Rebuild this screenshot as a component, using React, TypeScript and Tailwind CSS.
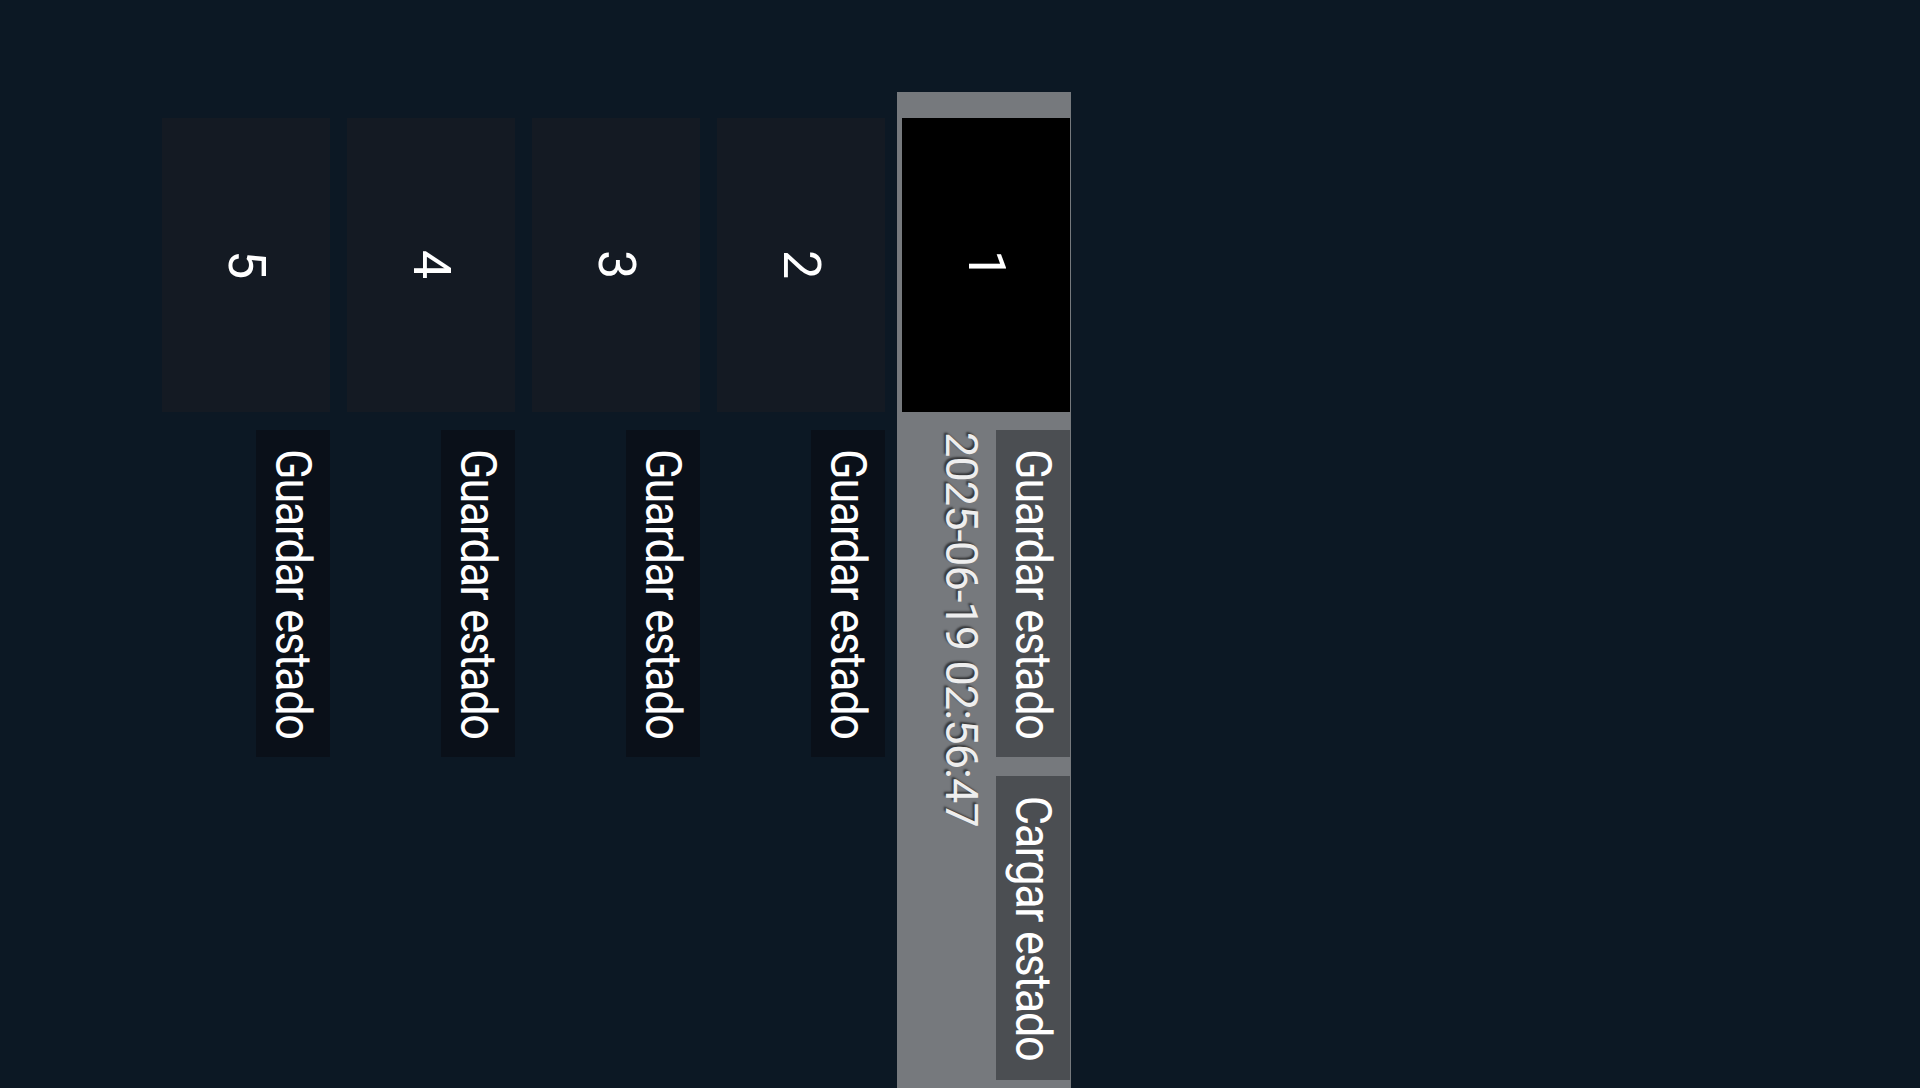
type Slot = {
  id: number;
  date?: string;
};

const slots: Slot[] = [
  { id: 1, date: '2025-06-19 02:56:47' },
  { id: 2 },
  { id: 3 },
  { id: 4 },
  { id: 5 },
];

function SaveSlot({ slot, selected }: { slot: Slot; selected: boolean }) {
  return (
    <div
      className={
        selected
          ? 'w-[174px] pt-[26px] pr-px flex items-start gap-[18px] bg-[#76797d]'
          : 'w-[174px] pt-[26px] pr-px flex items-start gap-[18px]'
      }
    >
      {/* Thumbnail */}
      <div
        className={
          selected
            ? 'w-[168px] h-[294px] flex items-center justify-center bg-black text-white text-[52px] leading-none'
            : 'w-[168px] h-[294px] flex items-center justify-center bg-[#141a23] text-white text-[52px] leading-none'
        }
      >
        {slot.id}
      </div>

      {/* Actions + date */}
      <div className="flex flex-col items-start gap-[12px]">
        <div className="flex gap-[19px]">
          <button
            className={
              selected
                ? 'w-[74px] h-[327px] flex items-center justify-center bg-[#4b4e52] text-white text-[50px] leading-none tracking-[-0.03em]'
                : 'w-[74px] h-[327px] flex items-center justify-center bg-[#0a1019] text-white text-[50px] leading-none tracking-[-0.03em]'
            }
          >
            <span className="inline-block scale-y-[0.9]">Guardar estado</span>
          </button>
          {slot.date && (
            <button className="w-[74px] h-[304px] flex items-center justify-center bg-[#4b4e52] text-white text-[50px] leading-none tracking-[-0.03em]">
              <span className="inline-block scale-y-[0.9]">Cargar estado</span>
            </button>
          )}
        </div>
        {slot.date && (
          <div className="pt-[2px] text-[#eeeeee] text-[45px] leading-none tracking-[-0.02em] [text-shadow:-2px_2px_2px_rgba(0,0,0,0.55)]">
            {slot.date}
          </div>
        )}
      </div>
    </div>
  );
}

export default function App() {
  return (
    <div className="w-full h-[1088px] overflow-hidden bg-[#0c1824] font-['Roboto',sans-serif] [writing-mode:vertical-rl]">
      <div className="flex flex-col gap-[11px] pt-[92px] pr-[849px] h-full">
        {slots.map((s) => (
          <SaveSlot key={s.id} slot={s} selected={s.id === 1} />
        ))}
      </div>
    </div>
  );
}
